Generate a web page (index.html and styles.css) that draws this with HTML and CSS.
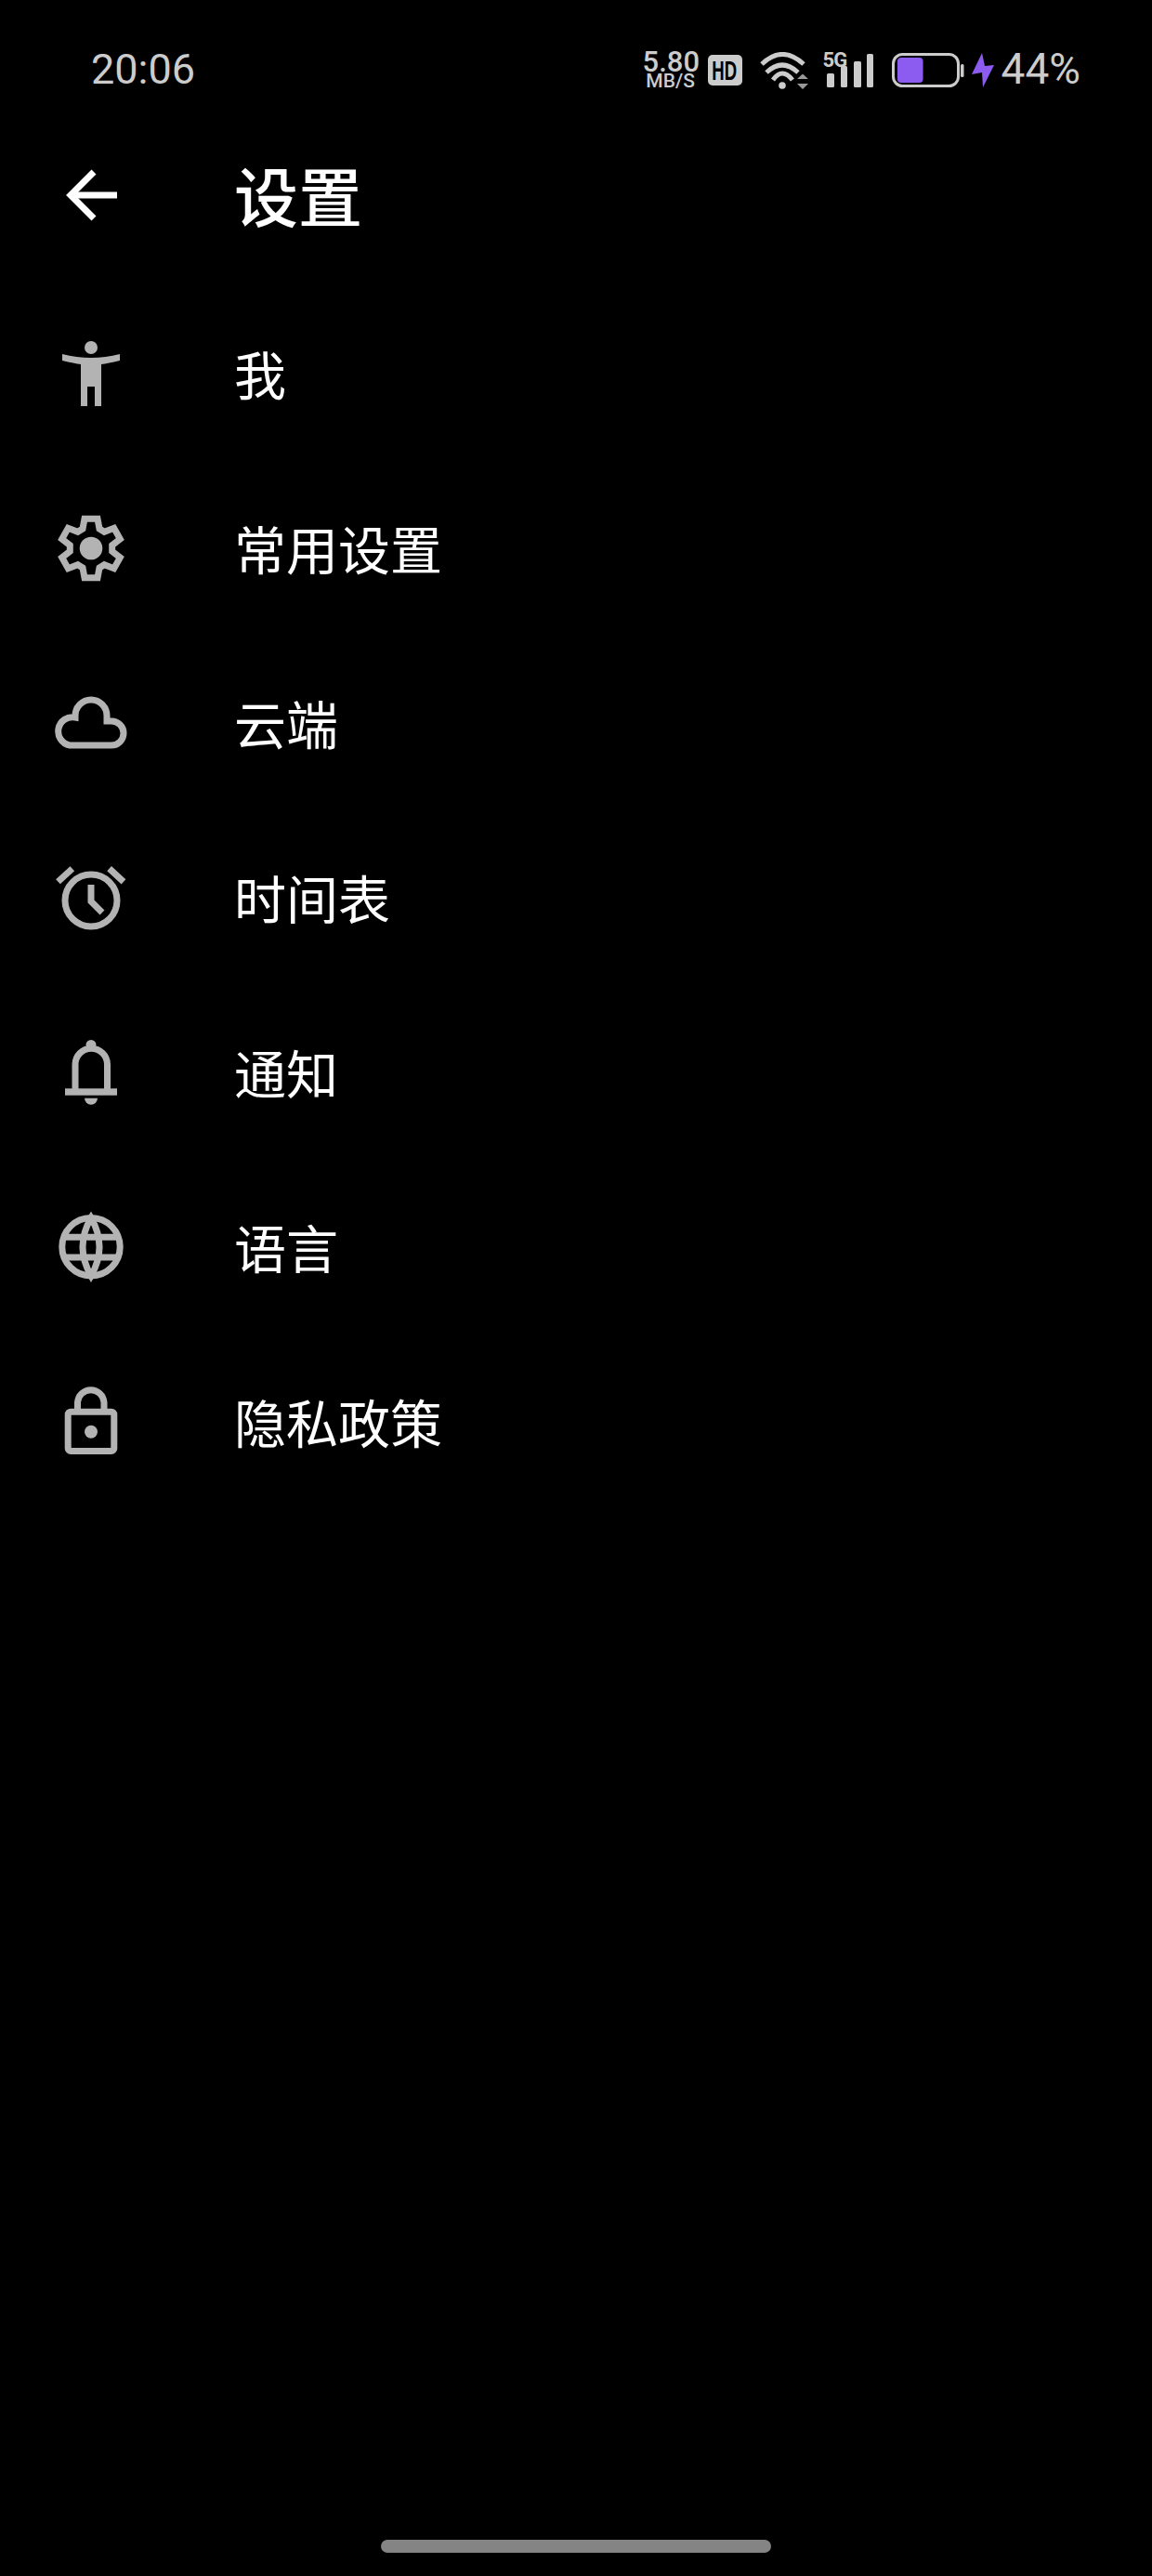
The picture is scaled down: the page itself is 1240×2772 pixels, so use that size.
FILE: index.html
```html
<html>
<head>
<title>设置</title>
<meta http-equiv="Content-Type" content="text/html; charset=utf-8"/>
<link rel="stylesheet" href="styles.css">
</head>
<body>
<div class="page">

<div class="status">
  <div class="time">20:06</div>
  <div class="status-right">
    <div class="speed">
      <div class="speed-num">5.80</div>
      <div class="speed-unit">MB/S</div>
    </div>
    <div class="hd"><span class="hd-text">HD</span></div>
    <svg class="wifi" width="53" height="40" viewBox="0 0 53 40">
      <path d="M2 13 Q24 -8 47 13" class="wifi-arc"/>
      <path d="M7 22 Q24 6 41 22" class="wifi-arc"/>
      <path d="M14 30 Q24 16 35 30" class="wifi-arc"/>
      <circle cx="24" cy="36" r="3.8" fill="#ccc"/>
      <path d="M40 29 L46 23.5 L52 29 Z M40 34 H52 L46 40 Z" fill="#999"/>
    </svg>
    <div class="signal">
      <div class="signal-text">5G</div>
      <svg width="54" height="37" viewBox="0 0 54 37">
        <rect x="4" y="22" width="8" height="15" rx="1.5" fill="#ccc"/>
        <rect x="19" y="14" width="7" height="23" rx="1.5" fill="#ccc"/>
        <rect x="33" y="9" width="8" height="28" rx="1.5" fill="#ccc"/>
        <rect x="47" y="1" width="7" height="36" rx="1.5" fill="#ccc"/>
      </svg>
    </div>
    <svg class="battery" width="78" height="37" viewBox="0 0 78 37">
      <rect x="1.5" y="1.5" width="70" height="34" rx="10" fill="none" stroke="#ccc" stroke-width="3"/>
      <rect x="6" y="5" width="27.5" height="27" rx="4" fill="#8c5cf0"/>
      <rect x="74" y="12" width="3.5" height="14" rx="1.5" fill="#ccc"/>
    </svg>
    <svg class="bolt" width="24" height="37" viewBox="0 0 24 37">
      <path d="M11 0 L0 23 L11 21 L12 37 L24 13 L14 14 Z" fill="#8c5cf0"/>
    </svg>
    <div class="percent">44%</div>
  </div>
</div>

<div class="header">
  <svg class="icon" width="84" height="84" viewBox="0 0 84 84">
    <path d="M70 40 H20" class="back"/>
    <path d="M45 15 L20 40 L45 65" class="back"/>
  </svg>
  <div class="title">设置</div>
</div>

<div class="list">
  <div class="row">
    <svg class="icon" width="84" height="84" viewBox="0 0 84 84">
      <circle cx="42" cy="11" r="7" class="solid"/>
      <path d="M11 18 Q42 26 73 18 L73 25 Q60 28 53 29 V74 H46 V53 H38 V74 H31 V29 Q24 28 11 25 Z" class="solid"/>
    </svg>
    <div class="label">我</div>
  </div>
  <div class="row">
    <svg class="icon" width="84" height="84" viewBox="0 0 84 84">
      <path d="M35 7.3 H49 L51 18 L56.3 21.3 L66.7 17.3 L73.3 29 L64.7 35.7 V42.3 L73.3 49 L66.7 60.7 L56.3 56.7 L51 60 L49 70.7 H35 L33 60 L27.7 56.7 L17.3 60.7 L10.7 49 L19.3 42.3 V35.7 L10.7 29 L17.3 17.3 L27.7 21.3 L33 18 Z" class="line"/>
      <circle cx="42" cy="39" r="12.3" class="solid"/>
    </svg>
    <div class="label">常用设置</div>
  </div>
  <div class="row">
    <svg class="icon" width="84" height="84" viewBox="0 0 84 84">
      <path d="M19 63 H64 A13 13 0 0 0 64 37 H59 V31 A17 17 0 0 0 25 31 V33 A15 15 0 0 0 19 63 Z" class="line"/>
    </svg>
    <div class="label">云端</div>
  </div>
  <div class="row">
    <svg class="icon" width="84" height="84" viewBox="0 0 84 84">
      <circle cx="42" cy="42" r="28" class="line"/>
      <path d="M42 25 V43 L54 55" class="line"/>
      <path d="M6.5 21.8 L21.8 7.7 M77 21.8 L61.6 7.7" class="line"/>
    </svg>
    <div class="label">时间表</div>
  </div>
  <div class="row">
    <svg class="icon" width="84" height="84" viewBox="0 0 84 84">
      <circle cx="42" cy="9.5" r="5.5" class="solid"/>
      <path d="M25 60 V30.5 A17 17 0 0 1 59.5 30.5 V60" class="line"/>
      <rect x="14" y="56.3" width="56" height="7.4" class="solid"/>
      <path d="M35 66.7 H49 A7 7 0 0 1 35 66.7 Z" class="solid"/>
    </svg>
    <div class="label">通知</div>
  </div>
  <div class="row">
    <svg class="icon" width="84" height="84" viewBox="0 0 84 84">
      <circle cx="42" cy="38.7" r="31.2" class="line"/>
      <path d="M42 7.5 Q24 38.7 42 70 Q60 38.7 42 7.5 Z" class="line"/>
      <path d="M13 28.3 H71 M13 50 H71" class="line"/>
    </svg>
    <div class="label">语言</div>
  </div>
  <div class="row">
    <svg class="icon" width="84" height="84" viewBox="0 0 84 84">
      <path d="M27.5 26 V18 A14.3 14.5 0 0 1 56 18 V26" class="line"/>
      <rect x="17.2" y="28.2" width="49.6" height="42.3" rx="3" class="line"/>
      <circle cx="42" cy="49.7" r="7" class="solid"/>
    </svg>
    <div class="label">隐私政策</div>
  </div>
</div>

<div class="home-bar"></div>

</div>
</body>
</html>
```

FILE: styles.css
```css
html, body {
    margin:0;
    background:#000;
}
.page {
    width:1240px;
    height:2772px;
    display:flex;
    flex-direction:column;
    font-family:"Noto Sans CJK SC", "Noto Sans", sans-serif;
    color:#fff;
}

/* status bar */
.status {
    height:148px;
    flex:none;
    display:flex;
    align-items:center;
    justify-content:space-between;
    padding:0 77px 0 98px;
    font-family:Roboto, sans-serif;
    color:#ccc;
}
.time {
    font-size:45px;
}
.status-right {
    display:flex;
    align-items:center;
    padding-top:3px;
}
.speed {
    width:60px;
    text-align:center;
    line-height:1;
    font-weight:500;
}
.speed-num {
    font-size:31px;
    height:25px;
    line-height:24px;
}
.speed-unit {
    font-size:21px;
    height:16px;
    line-height:15px;
}
.hd {
    width:37px;
    height:33px;
    margin-left:10px;
    display:flex;
    align-items:center;
    justify-content:center;
    background:#ccc;
    border-radius:5px;
}
.hd-text {
    font-family:"Liberation Sans", sans-serif;
    font-weight:bold;
    font-size:30px;
    line-height:33px;
    color:#000;
    transform:scaleX(0.62);
}
.wifi {
    margin-left:19px;
}
.wifi-arc {
    fill:none;
    stroke:#ccc;
    stroke-width:5;
}
.signal {
    position:relative;
    width:54px;
    height:37px;
    margin-left:15px;
}
.signal svg {
    display:block;
}
.signal-text {
    position:absolute;
    left:0;
    top:-4px;
    font-weight:bold;
    font-size:22px;
    line-height:24px;
    letter-spacing:-1px;
}
.battery {
    margin-left:20px;
}
.bolt {
    margin-left:8px;
}
.percent {
    margin-left:8px;
    margin-bottom:3px;
    font-size:46px;
}

/* header */
.header {
    height:128px;
    flex:none;
    display:flex;
    align-items:center;
    padding-left:56px;
}
.title {
    margin-left:112px;
    margin-bottom:6px;
    font-size:69px;
    font-weight:500;
}
.back {
    fill:none;
    stroke:#fff;
    stroke-width:7;
    stroke-miterlimit:4;
}

/* list */
.list {
    padding-top:35px;
}
.row {
    height:188px;
    display:flex;
    align-items:center;
    padding-left:56px;
}
.icon {
    flex:none;
}
.label {
    margin-left:112px;
    margin-bottom:8px;
    font-size:56px;
    line-height:80px;
}
.solid {
    fill:#b3b3b3;
}
.line {
    fill:none;
    stroke:#b3b3b3;
    stroke-width:7;
}

.home-bar {
    width:420px;
    height:14px;
    margin:auto auto 25px;
    background:#848484;
    border-radius:7px;
}
```
